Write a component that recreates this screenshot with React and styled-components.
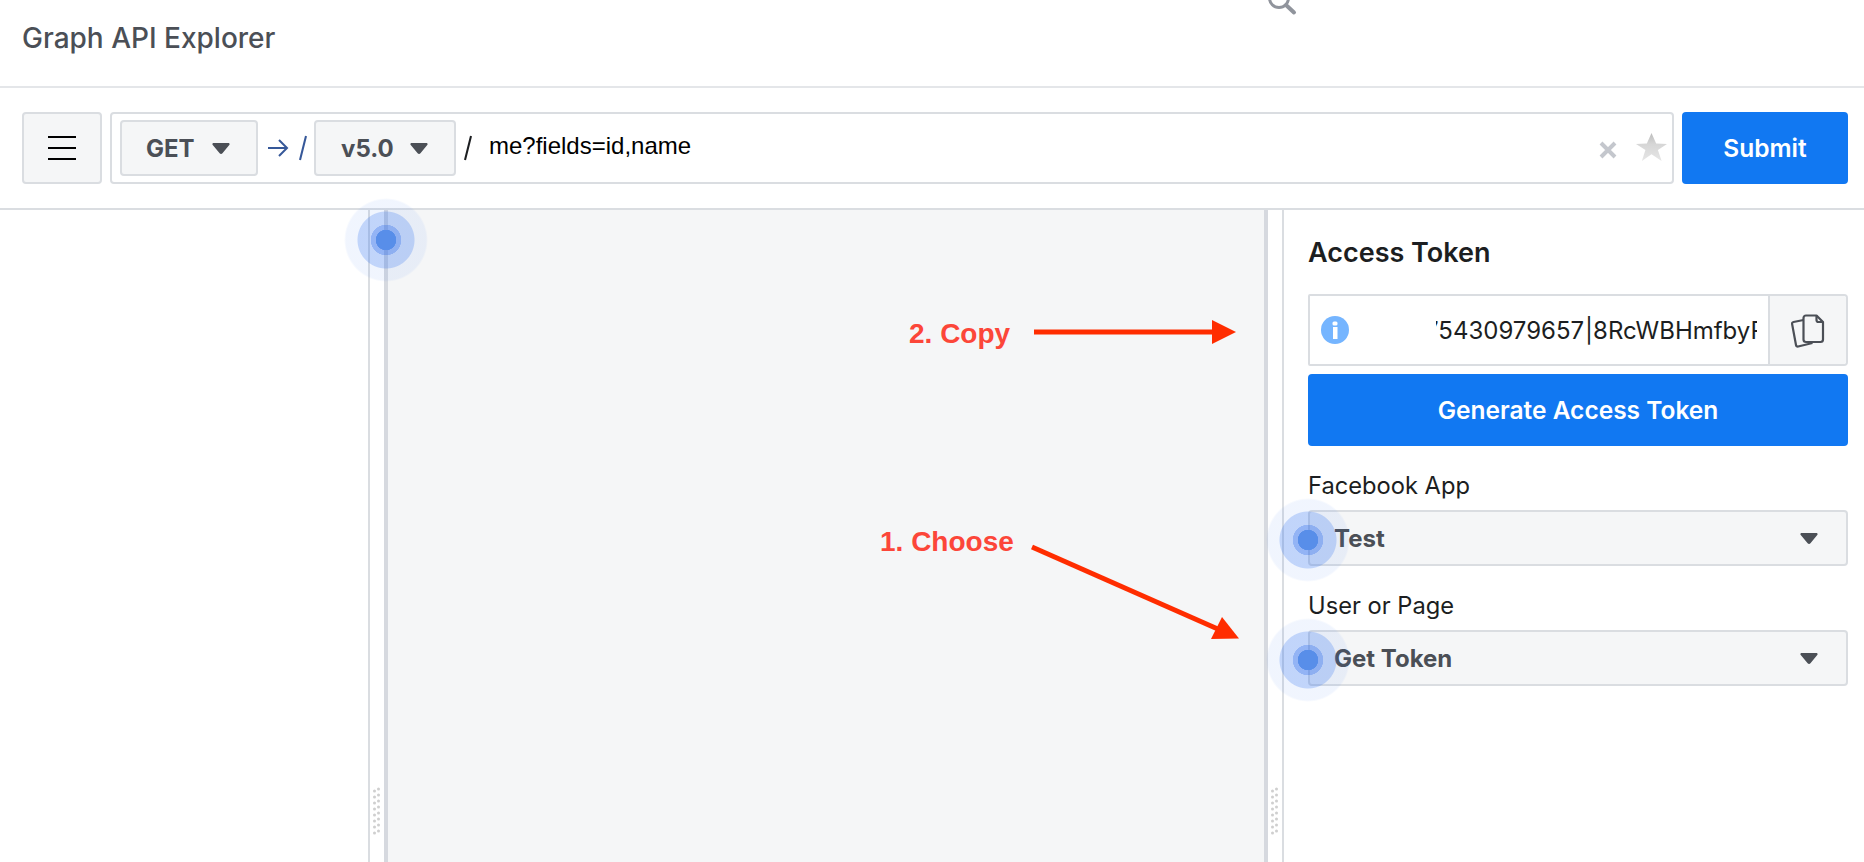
import styled, { createGlobalStyle } from "styled-components";

const GlobalStyle = createGlobalStyle`
  html, body {
    margin: 0;
    padding: 0;
    height: 100%;
    background: #fff;
  }
  * {
    box-sizing: border-box;
  }
`;

const Page = styled.div`
  position: relative;
  display: flex;
  flex-direction: column;
  width: 1864px;
  height: 862px;
  overflow: hidden;
  font-family: Inter, "Liberation Sans", sans-serif;
`;

const Header = styled.header`
  position: relative;
  display: flex;
  align-items: center;
  height: 88px;
  padding: 0 0 10px 22px;
  border-bottom: 2px solid #e4e6e9;
`;
const Title = styled.h1`
  margin: 0;
  font-size: 28px;
  font-weight: 500;
  color: #4b4f56;
`;
const SearchMark = styled.svg`
  position: absolute;
  left: 1265px;
  top: -14px;
  width: 32px;
  height: 30px;
`;

const Toolbar = styled.div`
  display: flex;
  gap: 8px;
  height: 122px;
  padding: 24px 16px 24px 22px;
  border-bottom: 2px solid #dadde1;
`;
const MenuButton = styled.button`
  display: flex;
  flex-direction: column;
  align-items: center;
  justify-content: center;
  gap: 9px;
  width: 80px;
  padding: 0;
  background: #f5f6f7;
  border: 2px solid #dadde1;
  border-radius: 4px;
  span {
    width: 28px;
    height: 2px;
    background: #000;
  }
`;
const UrlBar = styled.div`
  display: flex;
  align-items: center;
  flex: 1;
  padding: 0 5px 0 8px;
  background: #fff;
  border: 2px solid #dadde1;
  border-radius: 4px;
`;
const Dropdown = styled.div`
  display: flex;
  align-items: center;
  justify-content: space-between;
  flex: none;
  width: ${(p) => p.$width};
  height: 56px;
  padding: 0 ${(p) => p.$right}px 0 ${(p) => p.$left}px;
  font-size: 24px;
  font-weight: 700;
  color: #4b4f56;
  background: #f5f6f7;
  border: 2px solid #dadde1;
  border-radius: 4px;
`;
const Caret = styled.svg`
  width: 18px;
  height: 11px;
  fill: #4b4f56;
`;
const ArrowMark = styled.svg`
  width: 22px;
  height: 20px;
  margin-left: 9px;
  fill: none;
  stroke: #365899;
  stroke-width: 2;
`;
const Slash = styled.svg`
  width: 10px;
  height: 26px;
  margin: 0 ${(p) => p.$after}px 0 ${(p) => p.$before}px;
  stroke: ${(p) => p.$color};
  stroke-width: 2;
`;
const Query = styled.span`
  flex: 1;
  font-family: "Liberation Sans", Arial, sans-serif;
  font-size: 24px;
  color: #000;
  padding-bottom: 4px;
`;
const ClearMark = styled.svg`
  width: 18px;
  height: 18px;
  margin: 4px 19px 0 0;
  stroke: #c4c7cd;
  stroke-width: 4;
`;
const StarMark = styled.svg`
  width: 31px;
  height: 29px;
  margin-bottom: 2px;
`;
const BlueButton = styled.button`
  display: flex;
  align-items: center;
  justify-content: center;
  width: ${(p) => p.$width};
  height: 72px;
  flex: none;
  padding: 0;
  font-family: inherit;
  font-size: 24.5px;
  font-weight: 600;
  color: #fff;
  background: #1178f2;
  border: 0;
  border-radius: 4px;
`;

const Main = styled.main`
  display: flex;
  flex: 1;
  min-height: 0;
`;
const LeftPane = styled.div`
  width: 370px;
  background: #fff;
  border-right: 2px solid #dadde1;
`;
const Gutter = styled.div`
  display: flex;
  flex-direction: column;
  justify-content: flex-end;
  align-items: center;
  width: 14px;
  padding-bottom: 27px;
`;
const Grip = styled.svg`
  width: 8px;
  height: 48px;
  fill: #cfcfcf;
`;
const CenterPane = styled.div`
  position: relative;
  flex: 1;
  background: #f5f6f7;
  border-left: 4px solid #d6d9df;
  border-right: 4px solid #d6d9df;
`;
const Note = styled.span`
  position: absolute;
  left: ${(p) => p.$x}px;
  top: ${(p) => p.$y}px;
  font-family: "Liberation Sans", Arial, sans-serif;
  font-size: 28px;
  line-height: 32px;
  font-weight: 700;
  color: #fc4639;
  white-space: nowrap;
`;
const ArrowLayer = styled.svg`
  position: absolute;
  left: 0;
  top: 0;
  width: 100%;
  height: 100%;
  overflow: visible;
`;

const RightPane = styled.aside`
  display: flex;
  flex-direction: column;
  width: 582px;
  padding: 23px 16px 0 24px;
  background: #fff;
  border-left: 2px solid #dadde1;
`;
const PaneTitle = styled.h2`
  margin: 0 0 21px;
  height: 40px;
  line-height: 40px;
  font-size: 27px;
  font-weight: 600;
  color: #1c1e21;
`;
const TokenRow = styled.div`
  display: flex;
  align-items: center;
  height: 72px;
  margin-bottom: 8px;
  border: 2px solid #dadde1;
  border-radius: 2px 4px 4px 2px;
`;
const InfoMark = styled.svg`
  flex: none;
  width: 28px;
  height: 28px;
  margin: 0 87px 0 11px;
`;
const TokenClip = styled.div`
  flex: 1;
  overflow: hidden;
  white-space: nowrap;
  margin-right: 11px;
  font-size: 24px;
  color: #1c1e21;
  text-indent: -11px;
`;
const TokenPipe = styled.span`
  margin-left: 1px;
`;
const CopyButton = styled.div`
  display: flex;
  align-items: center;
  justify-content: center;
  flex: none;
  width: 78px;
  height: 100%;
  background: #f5f6f7;
  border-left: 2px solid #dadde1;
  border-radius: 0 3px 3px 0;
`;
const CopyMark = styled.svg`
  width: 36px;
  height: 36px;
  fill: none;
  stroke: #4b4f56;
  stroke-width: 2.2;
  stroke-linejoin: round;
`;
const FieldLabel = styled.label`
  display: block;
  height: 28px;
  line-height: 28px;
  margin: ${(p) => p.$top}px 0 10px;
  font-size: 23.7px;
  color: #1c1e21;
`;
const Pulse = styled.span`
  position: absolute;
  left: ${(p) => p.$x - 42}px;
  top: ${(p) => p.$y - 42}px;
  width: 84px;
  height: 84px;
  border-radius: 50%;
  background: radial-gradient(
    circle closest-side,
    #588ee9 0 10px,
    rgba(40, 105, 235, 0.5) 10.5px 15px,
    rgba(50, 115, 240, 0.3) 15.5px 28px,
    rgba(50, 115, 240, 0.07) 29px 40px,
    rgba(50, 115, 240, 0) 42px
  );
`;

const CaretIcon = () => (
  <Caret viewBox="0 0 19 12">
    <path d="M1.5 0h16c1.2 0 1.8 1.3 1 2.2l-7.4 9c-.8.9-2.3.9-3.100 0l-7.500-9C-.3 1.300.3 0 1.500 0z" />
  </Caret>
);

const GripIcon = () => (
  <Grip viewBox="0 0 8 48">
    {Array.from({ length: 8 }, (_, i) => (
      <g key={i}>
        <circle cx="1.500" cy={4 + i * 6} r="1.500" />
        <circle cx="5.500" cy={2 + i * 6} r="1.500" />
      </g>
    ))}
  </Grip>
);

const App = () => {
  return (
    <Page>
      <GlobalStyle />
      <Header>
        <Title>Graph API Explorer</Title>
        <SearchMark viewBox="0 0 32 30" fill="none" stroke="#90949c">
          <circle cx="14" cy="12" r="9.500" strokeWidth="3" />
          <path d="M21 19l8 7.500" strokeWidth="4" strokeLinecap="round" />
        </SearchMark>
      </Header>
      <Toolbar>
        <MenuButton>
          <span />
          <span />
          <span />
        </MenuButton>
        <UrlBar>
          <Dropdown $width="138px" $left={24} $right={26}>
            GET <CaretIcon />
          </Dropdown>
          <ArrowMark viewBox="0 0 22 20">
            <path d="M1 10h19M12 2l8 8-8 8" />
          </ArrowMark>
          <Slash viewBox="0 0 10 26" $color="#365899" $before={9} $after={6}>
            <path d="M8 1L2 25" />
          </Slash>
          <Dropdown $width="142px" $left={25} $right={26}>
            v5.0 <CaretIcon />
          </Dropdown>
          <Slash viewBox="0 0 10 26" $color="#1c1e21" $before={7} $after={16}>
            <path d="M8 1L2 25" />
          </Slash>
          <Query>me?fields=id,name</Query>
          <ClearMark viewBox="0 0 18 18">
            <path d="M2 2l14 14M16 2L2 16" />
          </ClearMark>
          <StarMark viewBox="0 0 30 28">
            <defs>
              <linearGradient id="star" x1="0" y1="0" x2="0" y2="1">
                <stop offset="0" stopColor="#bdbdbd" />
                <stop offset="0.4" stopColor="#d6d6d6" />
                <stop offset="1" stopColor="#e6e6e6" />
              </linearGradient>
            </defs>
            <path
              d="M15 0l4.500 10.200L30 10.600l-8.800 5.900L24.800 27 15 20.600 5.700 27l3.400-10.500L0 10.600l10.500-.4z"
              fill="url(#star)"
            />
          </StarMark>
        </UrlBar>
        <BlueButton $width="166px">Submit</BlueButton>
      </Toolbar>
      <Main>
        <LeftPane />
        <Gutter>
          <GripIcon />
        </Gutter>
        <CenterPane>
          <Note $x={521} $y={108}>
            2. Copy
          </Note>
          <Note $x={492} $y={316}>
            1. Choose
          </Note>
          <ArrowLayer fill="#ff2d00" stroke="none">
            <rect x="646" y="119.500" width="180" height="5" />
            <path d="M824 110l24 12-24 12z" />
            <path d="M645 334.700L643 339.300 835 424 837 419.400z" />
            <path d="M834 407l17 21.500-28 .5z" />
          </ArrowLayer>
        </CenterPane>
        <Gutter>
          <GripIcon />
        </Gutter>
        <RightPane>
          <PaneTitle>Access Token</PaneTitle>
          <TokenRow>
            <InfoMark viewBox="0 0 28 28">
              <circle cx="14" cy="14" r="14" fill="#75b5ff" />
              <rect x="11.500" y="5.500" width="5" height="4" rx="1.500" fill="#fff" />
              <rect x="12" y="11" width="4.500" height="12" fill="#fff" />
            </InfoMark>
            <TokenClip>
              75430979657<TokenPipe>|</TokenPipe>8RcWBHmfbyPq
            </TokenClip>
            <CopyButton>
              <CopyMark viewBox="0 0 36 36">
                <path d="M13.500 8L3.500 10c-1 .2-1.600 1-1.400 2L6 33c.2 1.200 1 1.700 2.200 1.500L22.500 31" />
                <path d="M16 3.500h10.500L33 10v17.500c0 1.500-1 2.500-2.500 2.500H16c-1.500 0-2.500-1-2.500-2.500V6c0-1.500 1-2.500 2.500-2.500z" />
                <path d="M26.500 3.500V8c0 1.200.8 2 2 2H33" />
              </CopyMark>
            </CopyButton>
          </TokenRow>
          <BlueButton $width="100%">Generate Access Token</BlueButton>
          <FieldLabel $top={26}>Facebook App</FieldLabel>
          <Dropdown $width="100%" $left={24} $right={28}>
            Test <CaretIcon />
          </Dropdown>
          <FieldLabel $top={26}>User or Page</FieldLabel>
          <Dropdown $width="100%" $left={24} $right={28}>
            Get Token <CaretIcon />
          </Dropdown>
        </RightPane>
      </Main>
      <Pulse $x={386} $y={240} />
      <Pulse $x={1308} $y={540} />
      <Pulse $x={1308} $y={660} />
    </Page>
  );
};

export default App;
